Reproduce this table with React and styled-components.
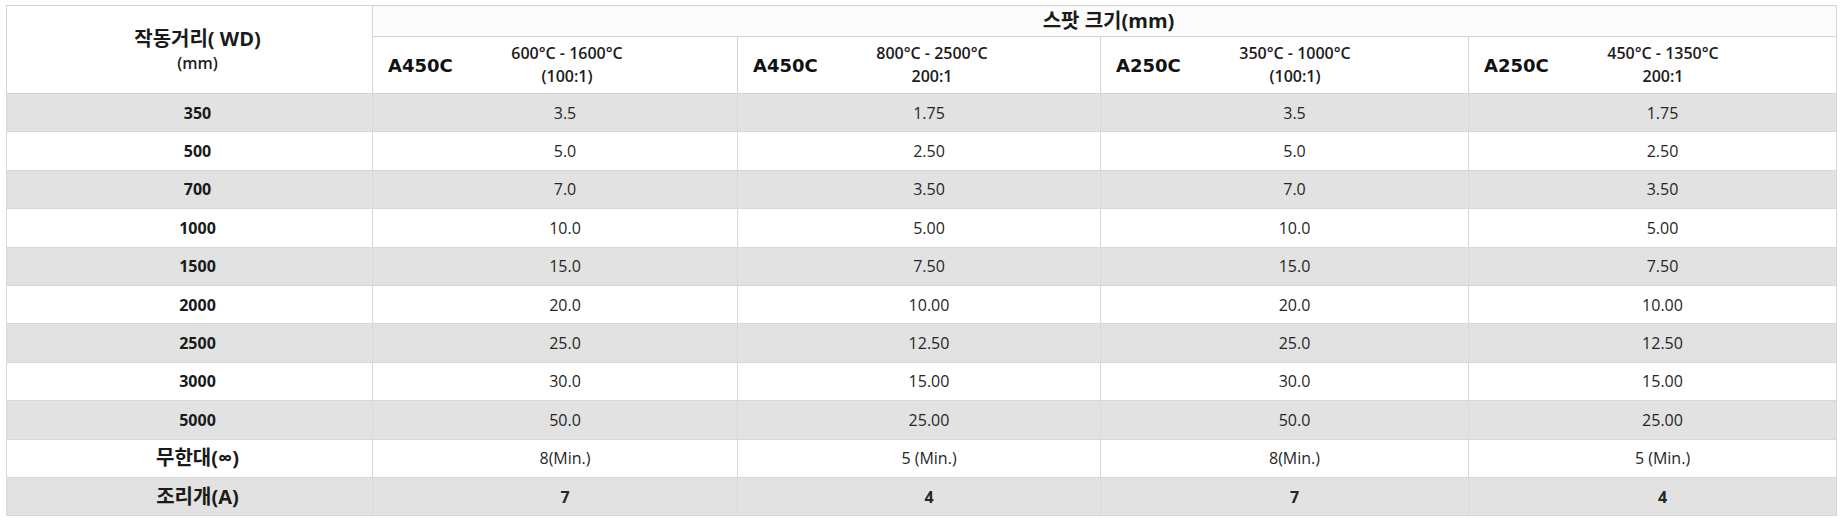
import React from 'react';
import styled, { createGlobalStyle } from 'styled-components';

const GlobalStyle = createGlobalStyle`
    html, body {
        margin: 0;
        padding: 0;
        background: #ffffff;
    }
    body {
        font-family: "Open Sans", "Noto Sans CJK KR", sans-serif;
        color: #222;
    }
`;

const models = [
    { name: 'A450C', range: '600°C - 1600°C', ratio: '(100:1)' },
    { name: 'A450C', range: '800°C - 2500°C', ratio: '200:1' },
    { name: 'A250C', range: '350°C - 1000°C', ratio: '(100:1)' },
    { name: 'A250C', range: '450°C - 1350°C', ratio: '200:1' },
];

const rows = [
    ['350', '3.5', '1.75', '3.5', '1.75'],
    ['500', '5.0', '2.50', '5.0', '2.50'],
    ['700', '7.0', '3.50', '7.0', '3.50'],
    ['1000', '10.0', '5.00', '10.0', '5.00'],
    ['1500', '15.0', '7.50', '15.0', '7.50'],
    ['2000', '20.0', '10.00', '20.0', '10.00'],
    ['2500', '25.0', '12.50', '25.0', '12.50'],
    ['3000', '30.0', '15.00', '30.0', '15.00'],
    ['5000', '50.0', '25.00', '50.0', '25.00'],
    ['무한대(∞)', '8(Min.)', '5 (Min.)', '8(Min.)', '5 (Min.)'],
    ['조리개(A)', '7', '4', '7', '4'],
];

const colWidths = [366, 365, 363, 368, 368];

function SpotTable() {
    return (
        <Wrapper>
            <Table>
                <colgroup>
                    {colWidths.map((w, i) => <col key={i} style={{ width: w }} />)}
                </colgroup>
                <thead>
                    <tr>
                        <CornerCell rowSpan={2}>
                            <CornerTitle>작동거리( WD)</CornerTitle>
                            <CornerUnit>(mm)</CornerUnit>
                        </CornerCell>
                        <GroupCell colSpan={4}>스팟 크기(mm)</GroupCell>
                    </tr>
                    <tr>
                        {models.map((m, i) => (
                            <ModelCell key={i}>
                                <ModelHead>
                                    <ModelName>{m.name}</ModelName>
                                    <TempRange>
                                        <span>{m.range}</span>
                                        <span>{m.ratio}</span>
                                    </TempRange>
                                </ModelHead>
                            </ModelCell>
                        ))}
                    </tr>
                </thead>
                <tbody>
                    {rows.map((row, index) => (
                        <BodyRow key={index} $shade={index % 2 === 0}>
                            <LabelCell $korean={index >= 9}>{row[0]}</LabelCell>
                            {row.slice(1).map((v, j) => (
                                <ValueCell key={j} $bold={index === 10}>{v}</ValueCell>
                            ))}
                        </BodyRow>
                    ))}
                </tbody>
            </Table>
        </Wrapper>
    );
}

export default function App() {
    return (
        <>
            <GlobalStyle />
            <SpotTable />
        </>
    );
}

const Wrapper = styled.div`
    padding: 5px 0 0 6px;
`;

const Table = styled.table`
    width: 1830px;
    table-layout: fixed;
    border-collapse: collapse;
    border: 1px solid #d4d4d4;
`;

const CornerCell = styled.th`
    padding: 2px 0 0 16px;
    border: 1px solid #d4d4d4;
    background: #fff;
    text-align: center;
    vertical-align: middle;
`;

const CornerTitle = styled.div`
    font-family: "Open Sans", "Noto Sans CJK KR", sans-serif;
    font-weight: 700;
    font-size: 20px;
    line-height: 25px;
    color: #1a1a1a;
`;

const CornerUnit = styled.div`
    font-family: "Open Sans", sans-serif;
    font-weight: 600;
    font-size: 16px;
    line-height: 25px;
    color: #222;
`;

const GroupCell = styled.th`
    height: 31px;
    box-sizing: border-box;
    padding: 0 0 0 8px;
    border: 1px solid #d4d4d4;
    background: #fcfcfc;
    font-family: "Open Sans", "Noto Sans CJK KR", sans-serif;
    font-weight: 700;
    font-size: 20px;
    line-height: 24px;
    color: #1a1a1a;
    text-align: center;
    vertical-align: middle;
`;

const ModelCell = styled.th`
    height: 57px;
    box-sizing: border-box;
    padding: 0;
    border: 1px solid #d4d4d4;
    background: #fff;
    vertical-align: middle;
`;

const ModelHead = styled.div`
    display: flex;
    align-items: center;
`;

const ModelName = styled.div`
    width: 110px;
    box-sizing: border-box;
    padding-left: 15px;
    text-align: left;
    font-family: "DejaVu Sans", "Liberation Sans", sans-serif;
    font-weight: 700;
    font-size: 18px;
    color: #111;
`;

const TempRange = styled.div`
    width: 168px;
    display: flex;
    flex-direction: column;
    align-items: center;
    font-family: "Open Sans", sans-serif;
    font-weight: 600;
    font-size: 16px;
    line-height: 23px;
    color: #1c1c1c;
`;

const BodyRow = styled.tr`
    height: 38.4px;
    background: ${p => (p.$shade ? '#e2e2e2' : '#ffffff')};
`;

const LabelCell = styled.td`
    padding: 0 0 0 16px;
    border: 1px solid #d8d8d8;
    text-align: center;
    vertical-align: middle;
    font-family: "Open Sans", "Noto Sans CJK KR", sans-serif;
    font-weight: 700;
    font-size: ${p => (p.$korean ? '20px' : '16px')};
    line-height: 24px;
    color: #1a1a1a;
`;

const ValueCell = styled.td`
    padding: 0 0 0 20px;
    border: 1px solid #d8d8d8;
    text-align: center;
    vertical-align: middle;
    font-family: "Open Sans", sans-serif;
    font-weight: ${p => (p.$bold ? 700 : 400)};
    font-size: 16px;
    line-height: 24px;
    color: #262626;
`;
